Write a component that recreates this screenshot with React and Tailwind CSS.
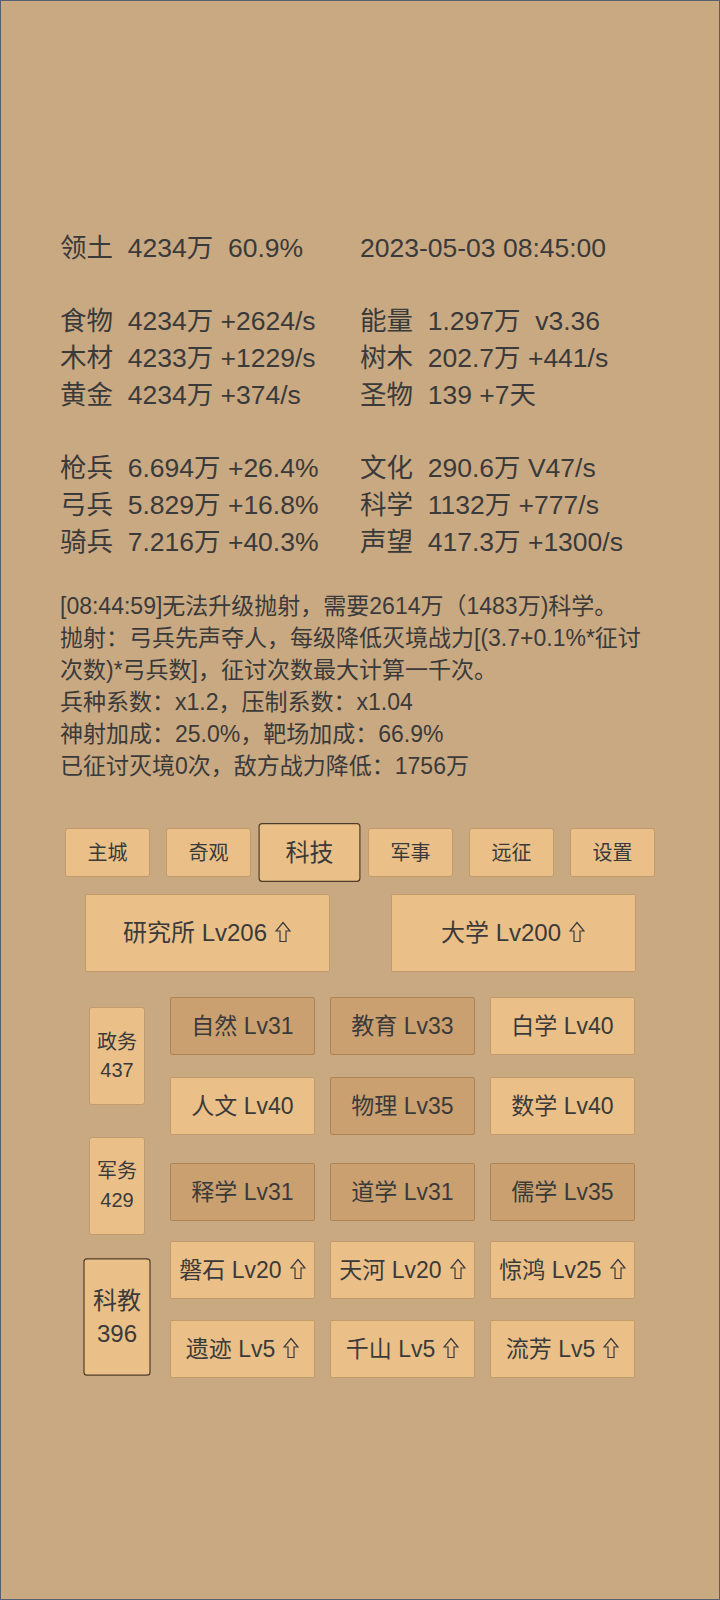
import React from 'react'

const FONT = { fontFamily: '"Liberation Sans", "Noto Sans CJK SC", sans-serif' }

// ── stat rows: [left, right], null = blank line ──
const STATS = [
  ['领土  4234万  60.9%', '2023-05-03 08:45:00'],
  null,
  ['食物  4234万 +2624/s', '能量  1.297万  v3.36'],
  ['木材  4233万 +1229/s', '树木  202.7万 +441/s'],
  ['黄金  4234万 +374/s', '圣物  139 +7天'],
  null,
  ['枪兵  6.694万 +26.4%', '文化  290.6万 V47/s'],
  ['弓兵  5.829万 +16.8%', '科学  1132万 +777/s'],
  ['骑兵  7.216万 +40.3%', '声望  417.3万 +1300/s'],
]

const LOG = [
  '[08:44:59]无法升级抛射，需要2614万（1483万)科学。',
  '抛射：弓兵先声夺人，每级降低灭境战力[(3.7+0.1%*征讨次数)*弓兵数]，征讨次数最大计算一千次。',
  '兵种系数：x1.2，压制系数：x1.04',
  '神射加成：25.0%，靶场加成：66.9%',
  '已征讨灭境0次，敌方战力降低：1756万',
]

const TABS = ['主城', '奇观', '科技', '军事', '远征', '设置']

// outlined "upgrade" arrow (⇧)
function Arrow() {
  return (
    <svg
      viewBox="0 0 16 22"
      className="ml-[8px] w-[16px] h-[22px] mb-[2px]"
      fill="none"
      stroke="#3a3a3a"
      strokeWidth="1.2"
      strokeLinejoin="miter"
    >
      <polygon points="8,1.5 15,10 11,10 11,20.5 5,20.5 5,10 1,10" />
    </svg>
  )
}

function Item({ name, lv, dark, up }) {
  return (
    <div
      className={
        'flex items-center justify-center h-[58px] rounded-[2px] border text-[23px] text-[#3a3a3a] whitespace-nowrap ' +
        (dark ? 'bg-[#caa070] border-[#ad8456]' : 'bg-[#ebc088] border-[#c29b6b]')
      }
    >
      {name} Lv{lv}
      {up && <Arrow />}
    </div>
  )
}

function SideBtn({ label, num, active }) {
  return (
    <div
      className={
        'flex flex-col items-center justify-center w-[56px] h-[98px] rounded-[3px] border bg-[#ebc088] text-[20px] leading-[28.5px] text-[#3a3a3a] ' +
        (active ? 'scale-120 border-[#4e3d2a]' : 'border-[#c29b6b]')
      }
    >
      <span>{label}</span>
      <span>{num}</span>
    </div>
  )
}

function Grid({ items }) {
  return (
    <div className="grid grid-cols-[145px_145px_145px] gap-x-[15px] gap-y-[21.5px]">
      {items.map((it) => (
        <Item key={it.name} {...it} />
      ))}
    </div>
  )
}

export default function App() {
  return (
    <div
      className="w-[720px] h-[1600px] border border-[#56606e] bg-[#c9a982] text-[#3a3a3a] overflow-hidden"
      style={FONT}
    >
      {/* ── stats ── */}
      <div className="pt-[229px] px-[59px] text-[26.5px] leading-[36.7px]">
        {STATS.map((row, i) =>
          row ? (
            <div key={i} className="grid grid-cols-2 whitespace-pre">
              <div>{row[0]}</div>
              <div>{row[1]}</div>
            </div>
          ) : (
            <div key={i} className="h-[36.7px]" />
          )
        )}
      </div>

      {/* ── log ── */}
      <div className="mt-[30px] ml-[59px] w-[592px] text-[23px] leading-[32px]">
        {LOG.map((l, i) => (
          <div key={i}>{l}</div>
        ))}
      </div>

      {/* ── tabs ── */}
      <div className="mt-[46px] flex justify-center gap-[16px]">
        {TABS.map((t) => (
          <div
            key={t}
            className={
              'flex items-center justify-center w-[85px] h-[49px] rounded-[3px] border bg-[#ebc088] text-[20px] ' +
              (t === '科技' ? 'scale-120 border-[#4e3d2a]' : 'border-[#c29b6b]')
            }
          >
            {t}
          </div>
        ))}
      </div>

      {/* ── buildings ── */}
      <div className="mt-[17px] flex justify-center gap-[61px]">
        {[
          ['研究所', 206],
          ['大学', 200],
        ].map(([n, lv]) => (
          <div
            key={n}
            className="flex items-center justify-center w-[245px] h-[78px] rounded-[2px] border border-[#c29b6b] bg-[#ebc088] text-[24px]"
          >
            {n} Lv{lv}
            <Arrow />
          </div>
        ))}
      </div>

      {/* ── tech groups ── */}
      <div className="mt-[25px] pl-[88px] flex flex-col">
        <div className="flex items-start gap-[25px]">
          <div className="mt-[10px]">
            <SideBtn label="政务" num="437" />
          </div>
          <Grid
            items={[
              { name: '自然', lv: 31, dark: true },
              { name: '教育', lv: 33, dark: true },
              { name: '白学', lv: 40 },
              { name: '人文', lv: 40 },
              { name: '物理', lv: 35, dark: true },
              { name: '数学', lv: 40 },
            ]}
          />
        </div>

        <div className="mt-[2px] flex items-start gap-[25px]">
          <SideBtn label="军务" num="429" />
          <div className="mt-[26px]">
            <Grid
              items={[
                { name: '释学', lv: 31, dark: true },
                { name: '道学', lv: 31, dark: true },
                { name: '儒学', lv: 35, dark: true },
              ]}
            />
          </div>
        </div>

        <div className="mt-[6px] flex items-start gap-[25px]">
          <div className="mt-[27px]">
            <SideBtn label="科教" num="396" active />
          </div>
          <Grid
            items={[
              { name: '磐石', lv: 20, up: true },
              { name: '天河', lv: 20, up: true },
              { name: '惊鸿', lv: 25, up: true },
              { name: '遗迹', lv: 5, up: true },
              { name: '千山', lv: 5, up: true },
              { name: '流芳', lv: 5, up: true },
            ]}
          />
        </div>
      </div>
    </div>
  )
}
